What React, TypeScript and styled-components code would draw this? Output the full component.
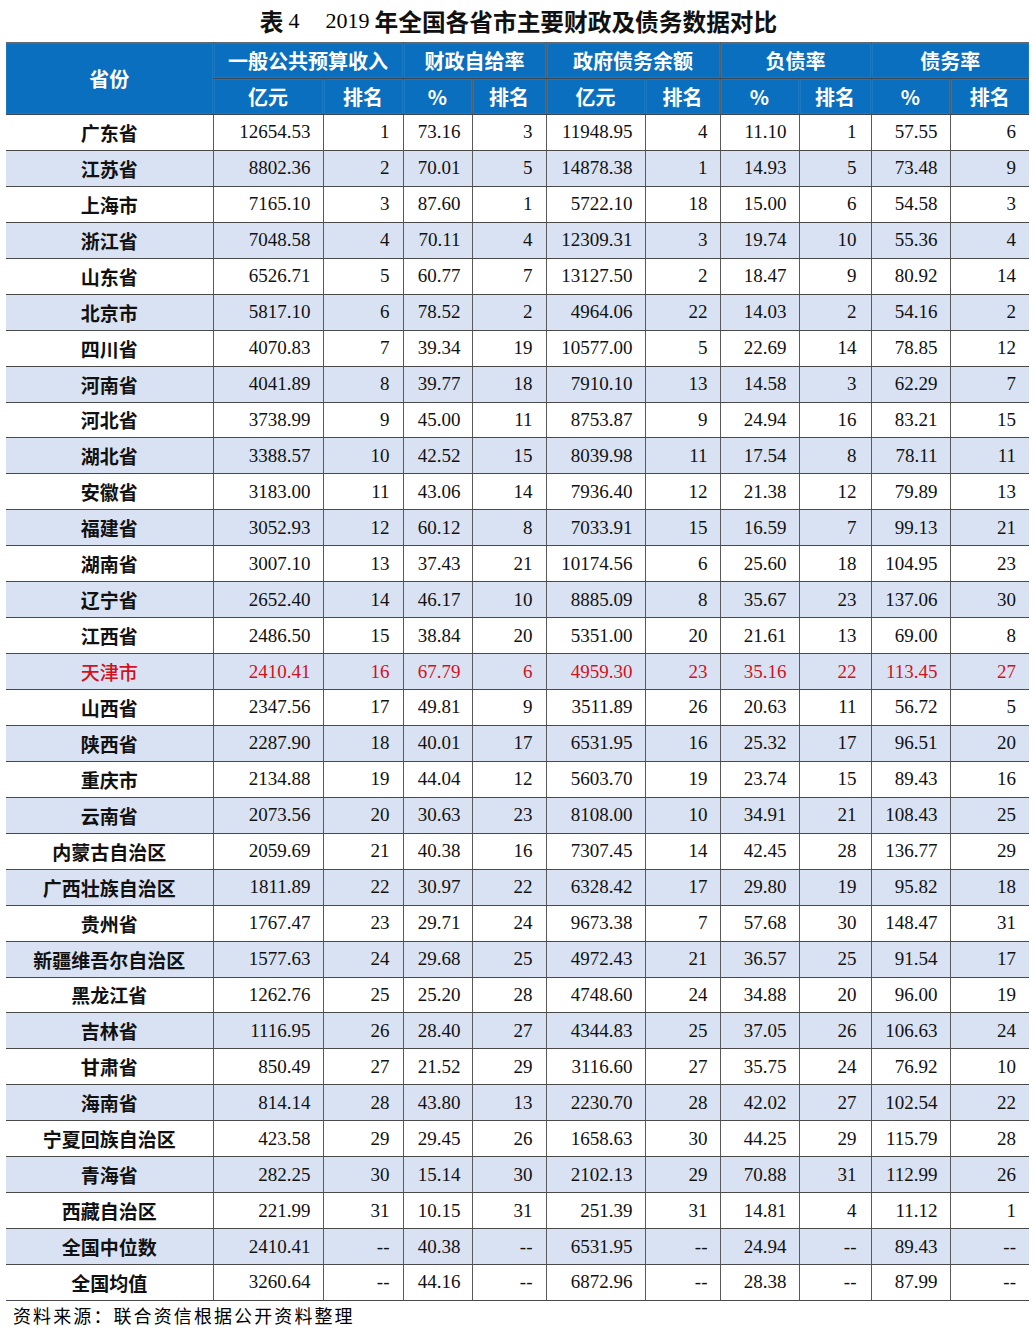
import React from "react";
import styled, { createGlobalStyle } from "styled-components";

const GlobalStyle = createGlobalStyle`
  body {
    margin: 0;
    background: #ffffff;
  }
`;

const Page = styled.div`
  width: 1036px;
  padding-left: 6px;
  box-sizing: border-box;
  font-family: "Liberation Serif", "Noto Sans CJK SC", serif;
  color: #111;
`;

const Title = styled.h1`
  margin: 0;
  height: 42px;
  display: flex;
  align-items: center;
  justify-content: center;
  padding-right: 5px;
  font-family: "Noto Sans CJK SC", sans-serif;
  font-size: 23.7px;
  font-weight: 700;
  color: #111;
  white-space: pre;
`;

const TitleNum = styled.span<{ $left: number; $right: number }>`
  font-family: "Liberation Serif", serif;
  font-size: 22px;
  font-weight: 400;
  color: #000;
  margin-left: ${(p) => p.$left}px;
  margin-right: ${(p) => p.$right}px;
`;

const Table = styled.table`
  width: 1023px;
  border-collapse: collapse;
  table-layout: fixed;
`;

const HeadCell = styled.th`
  height: 35px;
  padding: 0;
  background: #0a6fbe;
  color: #ffffff;
  font-family: "Noto Sans CJK SC", sans-serif;
  font-size: 20px;
  font-weight: 700;
  text-align: center;
  border-top: 1px solid #5f6870;
  border-bottom: 1px solid #3c4650;
  border-left: 1px solid #545c64;
  border-right: 1px solid #545c64;
  box-shadow: inset 0 0 0 1px rgba(255, 255, 255, 0.07);
  &:first-child {
    border-left: none;
  }
  &:last-child {
    border-right: none;
  }
`;

const Row = styled.tr<{ $shade: boolean; $red: boolean }>`
  height: 35.94px;
  background: ${(p) => (p.$shade ? "#d9e2f2" : "#ffffff")};
  color: ${(p) => (p.$red ? "#d4101c" : "#111111")};
  td {
    border-bottom: 1px solid #4a4a4a;
    border-left: 1px solid #5a5a5a;
    padding: 0;
  }
  td:first-child {
    border-left: none;
  }
`;

const NameCell = styled.td<{ $red: boolean }>`
  text-align: center;
  font-family: "Noto Sans CJK SC", sans-serif;
  font-size: 19px;
  font-weight: ${(p) => (p.$red ? 500 : 700)};
`;

const NumCell = styled.td<{ $pad: number }>`
  text-align: right;
  padding-right: ${(p) => p.$pad}px !important;
  font-family: "Liberation Serif", serif;
  font-size: 19px;
`;

const Footer = styled.div`
  padding: 2px 0 0 7px;
  font-family: "Noto Sans CJK SC", sans-serif;
  font-size: 18px;
  letter-spacing: 2.1px;
  color: #000;
  line-height: 24px;
`;

type Rec = [string, string, string, string, string, string, string, string, string, string, string];

const rows: Rec[] = [
  ["广东省", "12654.53", "1", "73.16", "3", "11948.95", "4", "11.10", "1", "57.55", "6"],
  ["江苏省", "8802.36", "2", "70.01", "5", "14878.38", "1", "14.93", "5", "73.48", "9"],
  ["上海市", "7165.10", "3", "87.60", "1", "5722.10", "18", "15.00", "6", "54.58", "3"],
  ["浙江省", "7048.58", "4", "70.11", "4", "12309.31", "3", "19.74", "10", "55.36", "4"],
  ["山东省", "6526.71", "5", "60.77", "7", "13127.50", "2", "18.47", "9", "80.92", "14"],
  ["北京市", "5817.10", "6", "78.52", "2", "4964.06", "22", "14.03", "2", "54.16", "2"],
  ["四川省", "4070.83", "7", "39.34", "19", "10577.00", "5", "22.69", "14", "78.85", "12"],
  ["河南省", "4041.89", "8", "39.77", "18", "7910.10", "13", "14.58", "3", "62.29", "7"],
  ["河北省", "3738.99", "9", "45.00", "11", "8753.87", "9", "24.94", "16", "83.21", "15"],
  ["湖北省", "3388.57", "10", "42.52", "15", "8039.98", "11", "17.54", "8", "78.11", "11"],
  ["安徽省", "3183.00", "11", "43.06", "14", "7936.40", "12", "21.38", "12", "79.89", "13"],
  ["福建省", "3052.93", "12", "60.12", "8", "7033.91", "15", "16.59", "7", "99.13", "21"],
  ["湖南省", "3007.10", "13", "37.43", "21", "10174.56", "6", "25.60", "18", "104.95", "23"],
  ["辽宁省", "2652.40", "14", "46.17", "10", "8885.09", "8", "35.67", "23", "137.06", "30"],
  ["江西省", "2486.50", "15", "38.84", "20", "5351.00", "20", "21.61", "13", "69.00", "8"],
  ["天津市", "2410.41", "16", "67.79", "6", "4959.30", "23", "35.16", "22", "113.45", "27"],
  ["山西省", "2347.56", "17", "49.81", "9", "3511.89", "26", "20.63", "11", "56.72", "5"],
  ["陕西省", "2287.90", "18", "40.01", "17", "6531.95", "16", "25.32", "17", "96.51", "20"],
  ["重庆市", "2134.88", "19", "44.04", "12", "5603.70", "19", "23.74", "15", "89.43", "16"],
  ["云南省", "2073.56", "20", "30.63", "23", "8108.00", "10", "34.91", "21", "108.43", "25"],
  ["内蒙古自治区", "2059.69", "21", "40.38", "16", "7307.45", "14", "42.45", "28", "136.77", "29"],
  ["广西壮族自治区", "1811.89", "22", "30.97", "22", "6328.42", "17", "29.80", "19", "95.82", "18"],
  ["贵州省", "1767.47", "23", "29.71", "24", "9673.38", "7", "57.68", "30", "148.47", "31"],
  ["新疆维吾尔自治区", "1577.63", "24", "29.68", "25", "4972.43", "21", "36.57", "25", "91.54", "17"],
  ["黑龙江省", "1262.76", "25", "25.20", "28", "4748.60", "24", "34.88", "20", "96.00", "19"],
  ["吉林省", "1116.95", "26", "28.40", "27", "4344.83", "25", "37.05", "26", "106.63", "24"],
  ["甘肃省", "850.49", "27", "21.52", "29", "3116.60", "27", "35.75", "24", "76.92", "10"],
  ["海南省", "814.14", "28", "43.80", "13", "2230.70", "28", "42.02", "27", "102.54", "22"],
  ["宁夏回族自治区", "423.58", "29", "29.45", "26", "1658.63", "30", "44.25", "29", "115.79", "28"],
  ["青海省", "282.25", "30", "15.14", "30", "2102.13", "29", "70.88", "31", "112.99", "26"],
  ["西藏自治区", "221.99", "31", "10.15", "31", "251.39", "31", "14.81", "4", "11.12", "1"],
  ["全国中位数", "2410.41", "--", "40.38", "--", "6531.95", "--", "24.94", "--", "89.43", "--"],
  ["全国均值", "3260.64", "--", "44.16", "--", "6872.96", "--", "28.38", "--", "87.99", "--"],
];

const widths = [207, 110, 80, 69, 74, 99, 75, 79, 72, 79, 79];
const pads = [0, 12, 13, 11, 13, 12, 12, 12, 14, 12, 13];

const groups = ["一般公共预算收入", "财政自给率", "政府债务余额", "负债率", "债务率"];
const units = ["亿元", "%", "亿元", "%", "%"];

const App = () => {
  return (
    <Page>
      <GlobalStyle />
      <Title>
        表<TitleNum $left={5} $right={26}>4</TitleNum>
        <TitleNum $left={0} $right={5}>2019</TitleNum>年全国各省市主要财政及债务数据对比
      </Title>
      <Table>
        <colgroup>
          {widths.map((w, i) => (
            <col key={i} style={{ width: w }} />
          ))}
        </colgroup>
        <thead>
          <tr>
            <HeadCell rowSpan={2}>省份</HeadCell>
            {groups.map((g) => (
              <HeadCell key={g} colSpan={2}>
                {g}
              </HeadCell>
            ))}
          </tr>
          <tr>
            {units.map((u, i) => (
              <React.Fragment key={i}>
                <HeadCell>{u}</HeadCell>
                <HeadCell>排名</HeadCell>
              </React.Fragment>
            ))}
          </tr>
        </thead>
        <tbody>
          {rows.map((r, i) => {
            const red = r[0] === "天津市";
            return (
              <Row key={r[0]} $shade={i % 2 === 1} $red={red}>
                <NameCell $red={red}>{r[0]}</NameCell>
                {r.slice(1).map((v, j) => (
                  <NumCell key={j} $pad={pads[j + 1]}>
                    {v}
                  </NumCell>
                ))}
              </Row>
            );
          })}
        </tbody>
      </Table>
      <Footer>资料来源：联合资信根据公开资料整理</Footer>
    </Page>
  );
};

export default App;
